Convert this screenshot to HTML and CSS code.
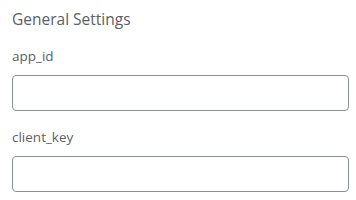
FILE: index.html
```html
<!DOCTYPE html>
<html lang="en">
<head>
    <meta charset="UTF-8">
    <title>General Settings</title>
    <link rel="stylesheet" href="styles.css">
</head>
<body>
    <div class="settings">
        <h3 class="title">General Settings</h3>
        <div class="field">
            <label for="app_id">app_id</label>
            <input type="text" id="app_id">
        </div>
        <div class="field">
            <label for="client_key">client_key</label>
            <input type="text" id="client_key">
        </div>
    </div>
</body>
</html>
```

FILE: styles.css
```css
body {
    margin: 0;
    font-family: 'Open Sans', sans-serif;
    background-color: #fff;
    color: #5b6068;
}
.settings {
    padding: 9px 7px 0 12px;
}
.title {
    margin: 0;
    font-size: 15.5px;
    font-weight: 400;
    line-height: 21px;
}
.field {
    display: flex;
    flex-direction: column;
}
.field label {
    font-size: 13.5px;
    line-height: 18px;
    margin: 17px 0 10px;
}
.field input {
    height: 36px;
    box-sizing: border-box;
    border: 1px solid #8c9197;
    border-radius: 4px;
    padding: 0 8px;
    font-size: 13px;
}
```
